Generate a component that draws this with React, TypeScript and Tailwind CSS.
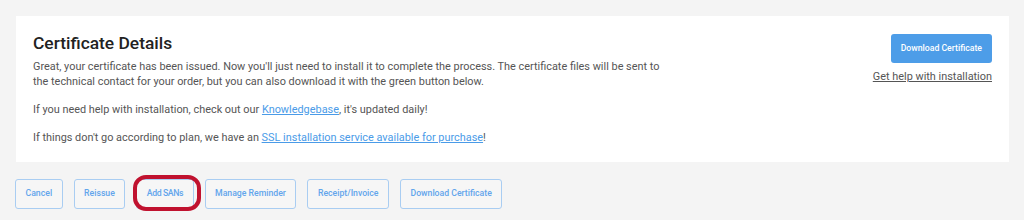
import React from 'react'

const actions = ['Cancel', 'Reissue', 'Add SANs', 'Manage Reminder', 'Receipt/Invoice', 'Download Certificate']

export default function App() {
  return (
    <div className="w-[1024px] h-[220px] bg-[#f4f4f4] font-['Roboto',sans-serif] overflow-hidden">
      <div className="pt-4 pl-4 pr-[15px]">
        {/* Card */}
        <div className="bg-white h-[146px] pl-[17px] pr-[17px] pt-[17px] flex justify-between">
          <div className="w-[632px]">
            <h2 className="text-[17.4px] leading-[21px] font-medium text-[#222]">Certificate Details</h2>
            <p className="mt-[6px] text-[10.9px] leading-[14.6px] text-[#555]">
              Great, your certificate has been issued. Now you'll just need to install it to complete the process. The certificate files will be sent to the technical contact for your order, but you can also download it with the green button below.
            </p>
            <p className="mt-[13.5px] text-[10.9px] leading-[14.6px] text-[#555]">
              If you need help with installation, check out our{' '}
              <a className="text-[#4a9be8] underline">Knowledgebase</a>, it's updated daily!
            </p>
            <p className="mt-[13.5px] text-[10.9px] leading-[14.6px] text-[#555]">
              If things don't go according to plan, we have an{' '}
              <a className="text-[#4a9be8] underline">SSL installation service available for purchase</a>!
            </p>
          </div>
          <div className="flex flex-col items-end pt-[1px]">
            <button className="h-[29px] px-[10px] rounded-[3px] bg-[#4d9de8] text-white text-[8.7px] font-medium">
              Download Certificate
            </button>
            <a className="mt-[7px] text-[10.9px] leading-[14.6px] text-[#555] underline">Get help with installation</a>
          </div>
        </div>
      </div>

      {/* Actions */}
      <div className="flex gap-[11px] pl-[15px] mt-[17px]">
        {actions.map((a) => (
          <div key={a} className="relative">
            <button
              className={`h-[30px] px-[9.5px] rounded-[3px] border border-[#a9cdf2] text-[#62a5ec] text-[8.7px] font-medium bg-[#f6f6f6] ${
                a === 'Add SANs' ? 'tracking-[-0.4px]' : ''
              }`}
            >
              {a}
            </button>
            {a === 'Add SANs' && (
              <span className="absolute -left-[3px] -right-[7px] -top-[4px] -bottom-[2px] rounded-[13px] border-[4px] border-[#c0122f] pointer-events-none" />
            )}
          </div>
        ))}
      </div>
    </div>
  )
}
